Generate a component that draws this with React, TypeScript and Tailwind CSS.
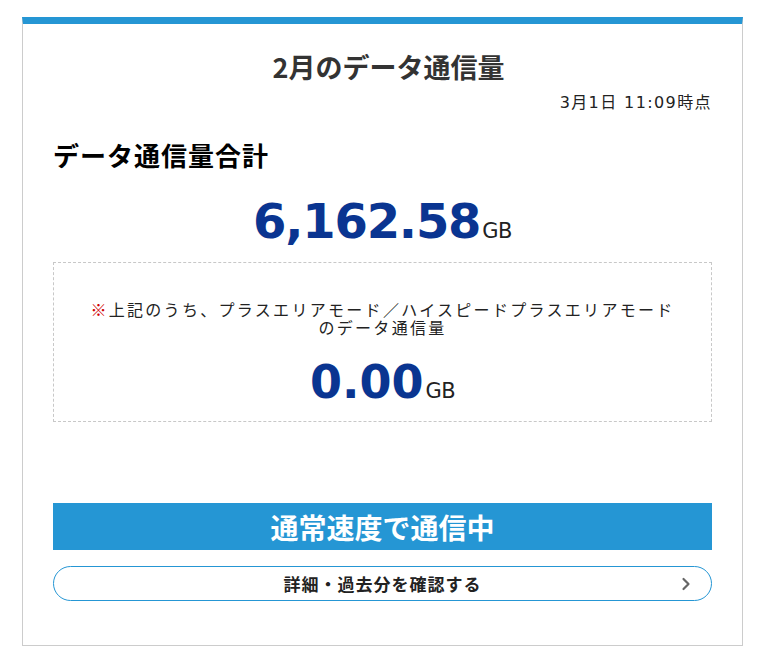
import React from 'react';

const jp = { fontFamily: '"Noto Sans CJK JP", "Noto Sans", sans-serif' };
const num = { fontFamily: '"DejaVu Sans", "Noto Sans CJK JP", sans-serif' };

const Amount: React.FC<{ value: string; size: string; unit: string }> = ({ value, size, unit }) => (
  <p className="flex items-baseline justify-center leading-none" style={num}>
    <span className={`${size} font-bold text-[#0a3591]`}>{value}</span>
    <span className="text-[21px] text-[#222] ml-[2px] tracking-[-0.5px]">{unit}</span>
  </p>
);

const App: React.FC = () => {
  return (
    <div className="min-h-screen bg-white pt-[17px] pl-[22px]" style={jp}>
      <div className="w-[721px] h-[629px] border border-[#cccccc] border-t-[7px] border-t-[#2596d4] px-[30px] flex flex-col">
        <h1 className="text-center text-[27px] font-bold text-[#333] mt-[26px] leading-[34px] pl-[12px]">
          2月のデータ通信量
        </h1>
        <p className="text-right text-[16px] text-[#222] mt-[9px] leading-[20px] tracking-[1.4px]" style={num}>
          3月1日 11:09時点
        </p>

        <h2 className="text-[26px] font-bold text-black mt-[26px] leading-[32px] tracking-[1px]">
          データ通信量合計
        </h2>

        <div className="mt-[26px]">
          <Amount value="6,162.58" size="text-[48px] tracking-[-1.2px]" unit="GB" />
        </div>

        <div className="mt-[17px] h-[160px] border border-dashed border-[#c8c8c8] flex flex-col items-center pt-[37px]">
          <p className="text-center text-[16px] leading-[18px] text-[#222] tracking-[2.3px]">
            <span className="text-[#d00000]">※</span>上記のうち、プラスエリアモード／ハイスピードプラスエリアモード
            <br />
            のデータ通信量
          </p>
          <div className="mt-[23px]">
            <Amount value="0.00" size="text-[46px] tracking-[0px]" unit="GB" />
          </div>
        </div>

        <div className="mt-[81px] h-[47px] bg-[#2596d4] flex items-center justify-center">
          <span className="text-white text-[28px] font-bold leading-none">通常速度で通信中</span>
        </div>

        <button className="mt-[16px] h-[35px] rounded-full border border-[#2596d4] bg-white relative flex items-center justify-center">
          <span className="text-[17px] font-bold text-[#222] tracking-[1px] leading-none">詳細・過去分を確認する</span>
          <svg
            className="absolute right-[20px] top-1/2 -translate-y-1/2"
            width="10"
            height="14"
            viewBox="0 0 10 14"
            fill="none"
          >
            <path d="M2.5 2 L7.5 7 L2.5 12" stroke="#666" strokeWidth="2.2" strokeLinecap="round" strokeLinejoin="round" />
          </svg>
        </button>
      </div>
    </div>
  );
};

export default App;
